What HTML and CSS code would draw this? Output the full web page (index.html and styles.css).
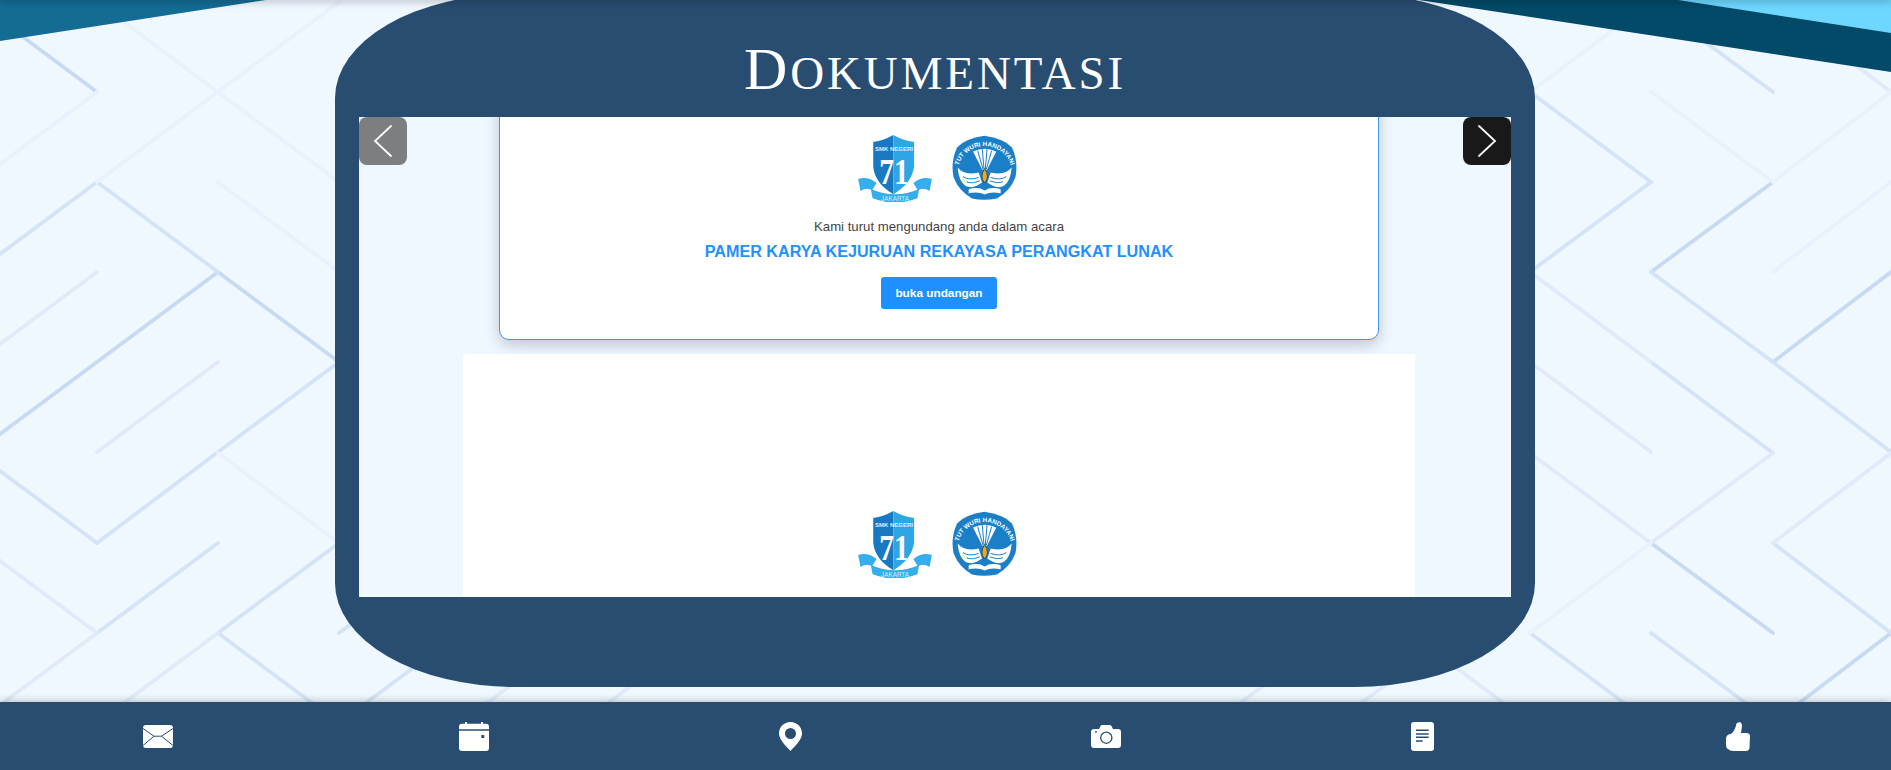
FILE: index.html
```html
<!DOCTYPE html>
<html lang="id">
<head>
<meta charset="utf-8">
<title>Dokumentasi</title>
<link rel="stylesheet" href="styles.css">
</head>
<body class="page">
<svg class="backdrop" viewBox="0 0 1891 770" aria-hidden="true">
  <g class="ln ln-strong"><path d="M-24 2L97 92M218 272L339 362M218 272L97 362L-24 452M1773 182L1651 272M1773 362L1891 272M1891 633L1773 723M1651 543L1773 633"/></g>
  <g class="ln ln-med"><path d="M97 182L-24 272M97 182L218 272M339 362L218 452L97 543M-24 453L97 543M218 543L97 633M339 543L218 633M218 633L339 723M339 633L460 543M460 633L339 723M1530 92L1651 182L1530 272M1651 272L1773 362L1891 452M1651 2L1773 92M1651 362L1773 453M1773 543L1891 633M1530 633L1651 723M1651 633L1773 723"/></g>
  <g class="ln ln-light"><path d="M97 272L-24 362M218 362L97 452M97 633L-24 723M-24 543L97 633M218 633L97 723M581 633L460 723M702 633L581 723M1335 633L1213 723M1456 633L1334 723M1530 272L1651 362M1530 362L1651 452M1530 453L1651 543M1773 453L1651 543M1891 453L1773 543M1410 633L1530 723M1773 2L1891 92"/></g>
  <g class="ln ln-faint"><path d="M97 92L-24 182M339 2L97 182M97 2L339 182M218 182L339 272M218 453L339 543M1651 92L1773 182M1773 182L1891 92M1773 272L1891 182M1530 92L1651 2M1651 543L1530 633"/></g>
  <path class="wedge-teal" d="M0 0L266 0L0 41Z"/>
  <path class="wedge-dark" d="M1419 0L1891 72L1891 0Z"/>
  <path class="wedge-sky" d="M1678 0L1891 33L1891 0Z"/>
</svg>
<div class="topbar"></div>
<main class="panel">
  <h1 class="panel-title"><span class="panel-cap">D</span>okumentasi</h1>
  <section class="slider">
    <div class="slide-first">
      <article class="invite">
        <div class="logos">
          <svg class="logo-smk" viewBox="55 45 220 200" role="img" aria-label="SMK Negeri 71 Jakarta">
            <path class="smk-ribbon" d="M55 176Q85 168 110 188L97 210Q80 200 62 212ZM275 176Q245 168 220 188L233 210Q250 200 268 212Z"/>
            <path class="smk-dark" d="M160 45Q130 62 100 66L100 140Q105 190 160 222Z"/>
            <path class="smk-light" d="M160 45Q190 62 222 66L222 140Q215 190 160 222Z"/>
            <path class="smk-ribbon" d="M93 206Q165 238 237 206L232 234Q165 260 98 234Z"/>
            <text class="smk-name" x="162" y="92">SMK NEGERI</text>
            <text class="smk-num" x="162" y="190" textLength="88" lengthAdjust="spacingAndGlyphs">71</text>
            <text class="smk-city" x="165" y="243">JAKARTA</text>
          </svg>
          <svg class="logo-tut" viewBox="335 48 195 200" role="img" aria-label="Tut Wuri Handayani">
            <path class="tut-base" d="M432 50Q490 58 515 85Q535 130 525 175Q510 215 470 238Q430 246 395 238Q355 215 340 175Q330 130 350 85Q375 58 432 50Z"/>
            <path id="tut-arc-1" class="tut-none" d="M352 150A82 82 0 0 1 514 150"/>
            <text class="tut-motto"><textPath href="#tut-arc-1" startOffset="50%">TUT WURI HANDAYANI</textPath></text>
            <path class="tut-white" d="M398 97Q433 80 468 97L440 152H426Z"/>
            <path class="tut-slit" d="M412 94L428 150M426 90L431 150M440 90L435 150M454 94L438 150"/>
            <path class="tut-white" d="M352 145Q372 170 415 160L425 190Q395 212 375 200Q355 185 352 145ZM514 145Q494 170 451 160L441 190Q471 212 491 200Q511 185 514 145Z"/>
            <path class="tut-slit" d="M368 172Q385 185 415 175M378 188Q395 195 418 185M498 172Q481 185 451 175M488 188Q471 195 448 185"/>
            <path class="tut-flame" d="M433 148Q450 172 433 192Q416 172 433 148Z"/>
            <path class="tut-white" d="M385 210Q415 202 433 214Q451 202 481 210L481 222Q451 216 433 226Q415 216 385 222Z"/>
          </svg>
        </div>
        <p class="invite-lead">Kami turut mengundang anda dalam acara</p>
        <h2 class="invite-name">PAMER KARYA KEJURUAN REKAYASA PERANGKAT LUNAK</h2>
        <a class="invite-btn">buka undangan</a>
      </article>
    </div>
    <div class="slide-next">
      <div class="logos">
        <svg class="logo-smk" viewBox="55 45 220 200" role="img" aria-label="SMK Negeri 71 Jakarta">
          <path class="smk-ribbon" d="M55 176Q85 168 110 188L97 210Q80 200 62 212ZM275 176Q245 168 220 188L233 210Q250 200 268 212Z"/>
          <path class="smk-dark" d="M160 45Q130 62 100 66L100 140Q105 190 160 222Z"/>
          <path class="smk-light" d="M160 45Q190 62 222 66L222 140Q215 190 160 222Z"/>
          <path class="smk-ribbon" d="M93 206Q165 238 237 206L232 234Q165 260 98 234Z"/>
          <text class="smk-name" x="162" y="92">SMK NEGERI</text>
          <text class="smk-num" x="162" y="190" textLength="88" lengthAdjust="spacingAndGlyphs">71</text>
          <text class="smk-city" x="165" y="243">JAKARTA</text>
        </svg>
        <svg class="logo-tut" viewBox="335 48 195 200" role="img" aria-label="Tut Wuri Handayani">
          <path class="tut-base" d="M432 50Q490 58 515 85Q535 130 525 175Q510 215 470 238Q430 246 395 238Q355 215 340 175Q330 130 350 85Q375 58 432 50Z"/>
          <path id="tut-arc-2" class="tut-none" d="M352 150A82 82 0 0 1 514 150"/>
          <text class="tut-motto"><textPath href="#tut-arc-2" startOffset="50%">TUT WURI HANDAYANI</textPath></text>
          <path class="tut-white" d="M398 97Q433 80 468 97L440 152H426Z"/>
          <path class="tut-slit" d="M412 94L428 150M426 90L431 150M440 90L435 150M454 94L438 150"/>
          <path class="tut-white" d="M352 145Q372 170 415 160L425 190Q395 212 375 200Q355 185 352 145ZM514 145Q494 170 451 160L441 190Q471 212 491 200Q511 185 514 145Z"/>
          <path class="tut-slit" d="M368 172Q385 185 415 175M378 188Q395 195 418 185M498 172Q481 185 451 175M488 188Q471 195 448 185"/>
          <path class="tut-flame" d="M433 148Q450 172 433 192Q416 172 433 148Z"/>
          <path class="tut-white" d="M385 210Q415 202 433 214Q451 202 481 210L481 222Q451 216 433 226Q415 216 385 222Z"/>
        </svg>
      </div>
    </div>
    <button class="arrow arrow-prev" aria-label="Sebelumnya"><svg class="arrow-icon" viewBox="0 0 48 48"><path d="M32 9L16 24L32 39"/></svg></button>
    <button class="arrow arrow-next" aria-label="Berikutnya"><svg class="arrow-icon" viewBox="0 0 48 48"><path d="M16 9L32 24L16 39"/></svg></button>
  </section>
</main>
<nav class="dock">
  <a class="dock-item"><svg class="ic-mail" viewBox="0 0 30 23"><rect class="ic-fill" width="30" height="23" rx="3"/><path class="ic-cut" d="M0 3.5L11 11.2H18.5L30 3.5M0 20.5L11 11.2M30 20.5L18.5 11.2"/></svg></a>
  <a class="dock-item"><svg class="ic-cal" viewBox="0 0 30 29"><path class="ic-fill" d="M6 0H8V1.7H22V0H24V1.7H27Q30 1.7 30 4.7V7.3H0V4.7Q0 1.7 3 1.7H6ZM0 8.7H30V26Q30 29 27 29H3Q0 29 0 26Z"/><rect class="ic-hole" x="22.3" y="13" width="3" height="3" rx=".6"/></svg></a>
  <a class="dock-item"><svg class="ic-pin" viewBox="0 0 23 29"><path class="ic-fill ic-even" d="M11.5 0C18 0 23 5 23 11.5C23 18 15 25 11.5 29C8 25 0 18 0 11.5C0 5 5 0 11.5 0ZM11.5 6A5.5 5.5 0 1 0 11.5 17A5.5 5.5 0 1 0 11.5 6Z"/></svg></a>
  <a class="dock-item"><svg class="ic-cam" viewBox="0 0 30 23"><path class="ic-fill" d="M8 4L9.5 1Q10 0 11.5 0H18.5Q20 0 20.5 1L22 4H27Q30 4 30 7V20Q30 23 27 23H3Q0 23 0 20V7Q0 4 3 4Z"/><circle class="ic-ring" cx="15.3" cy="12.7" r="5.6"/><circle class="ic-hole" cx="5" cy="7" r=".9"/></svg></a>
  <a class="dock-item"><svg class="ic-doc" viewBox="0 0 23 29"><rect class="ic-fill" width="23" height="29" rx="3"/><path class="ic-cut ic-thick" d="M5 8.3H17.7M5 12H17.7M5 15.3H17.7M5 19H11.7"/></svg></a>
  <a class="dock-item"><svg class="ic-thumb" viewBox="0 0 24 29"><path class="ic-fill" d="M10.5 1.5Q12 0 14 0Q16 1 16 4L15 11H21Q24 11.5 24 14L23.5 26Q23 29 20 29H7Q4 29 2 27Q0 26 0 23V16Q1 12 5 12Q9 9 10.5 1.5Z"/></svg></a>
</nav>
</body>
</html>
```
FILE: styles.css
```css
* { box-sizing: border-box; }
html, body { margin: 0; padding: 0; }
.page {
  position: relative;
  display: flex;
  flex-direction: column;
  height: 770px;
  overflow: hidden;
  background: #eff7ff;
  font-family: "Liberation Sans", Arial, sans-serif;
}
.backdrop {
  position: absolute;
  left: 0;
  top: 0;
  width: 1891px;
  height: 770px;
}
.ln { fill: none; stroke-width: 3.8; stroke-linecap: round; stroke-linejoin: miter; }
.ln-strong { stroke: #c8daf3; }
.ln-med { stroke: #d4e3f7; }
.ln-light { stroke: #dfebfa; }
.ln-faint { stroke: #e8f1fd; }
.wedge-teal { fill: #146c94; }
.wedge-dark { fill: #024a68; }
.wedge-sky { fill: #6dd7ff; }
.topbar {
  position: absolute;
  left: 0;
  top: 0;
  width: 100%;
  height: 0;
  z-index: 3;
  box-shadow: 0 0 7px 1px rgba(0, 0, 0, .55);
}
.panel {
  position: relative;
  width: 1200px;
  height: 693px;
  margin: -6px 0 0 335px;
  padding: 0 24px;
  flex: none;
  background: #284d70;
  border-radius: 15%;
}
.panel-title {
  height: 123px;
  margin: 0;
  padding-top: 37px;
  color: #fff;
  font: 400 47px/76px "Liberation Serif", "Times New Roman", serif;
  letter-spacing: 2.9px;
  text-align: center;
  text-transform: uppercase;
}
.panel-cap { font-size: 60px; }
.slider {
  position: relative;
  width: 1152px;
  height: 480px;
  overflow: hidden;
  background: #eff7ff;
}
.slide-first {
  display: flex;
  align-items: flex-start;
  height: 237px;
  padding-left: 140px;
}
.invite {
  display: flex;
  flex-direction: column;
  align-items: center;
  flex: none;
  width: 880px;
  height: 262.5px;
  margin-top: -40px;
  padding-top: 57px;
  background: #fff;
  border: 1px solid #3f97f0;
  border-radius: 10px;
  box-shadow: 0 5px 15px rgba(0, 0, 0, .2);
}
.logos {
  display: flex;
  gap: 20px;
  justify-content: center;
  padding-right: 3px;
}
.logo-smk { display: block; width: 74px; height: 67px; }
.logo-tut { display: block; width: 65px; height: 67px; }
.smk-dark { fill: #1878c2; }
.smk-light { fill: #2ea6e6; }
.smk-ribbon { fill: #34aeec; }
.smk-name { fill: #d8effb; font: 700 18px "Liberation Sans", sans-serif; text-anchor: middle; }
.smk-num { fill: #fff; font: 700 104px "Liberation Serif", serif; text-anchor: middle; }
.smk-city { fill: #d8f1fc; font: 400 19px "Liberation Sans", sans-serif; text-anchor: middle; }
.tut-base { fill: #1b7fc8; }
.tut-none { fill: none; }
.tut-motto { fill: #fff; font: 700 19px "Liberation Sans", sans-serif; text-anchor: middle; }
.tut-white { fill: #fff; }
.tut-slit { fill: none; stroke: #1b7fc8; stroke-width: 3; }
.tut-flame { fill: #f2a51f; stroke: #1a4f78; stroke-width: 3; }
.invite-lead {
  margin: 16px 0 0;
  color: #444;
  font-size: 13.2px;
  line-height: 18px;
}
.invite-name {
  margin: 5px 0 0;
  color: #1e90ff;
  font-size: 16.15px;
  font-weight: 700;
  line-height: 20px;
}
.invite-btn {
  display: flex;
  align-items: center;
  justify-content: center;
  width: 116px;
  height: 32px;
  margin-top: 16px;
  background: #1e90ff;
  border-radius: 3px;
  color: #fff;
  font-size: 11.8px;
  font-weight: 700;
}
.slide-next {
  position: relative;
  width: 952px;
  height: 243px;
  margin-left: 104px;
  padding-top: 157px;
  background: #fff;
}
.arrow {
  position: absolute;
  top: 0;
  width: 48px;
  height: 48px;
  padding: 0;
  border: 0;
  border-radius: 8px;
}
.arrow-prev { left: 0; background: #7c7e80; }
.arrow-next { right: 0; background: #191919; }
.arrow-icon { display: block; width: 48px; height: 48px; }
.arrow-icon path { fill: none; stroke: #fff; stroke-width: 1.8; stroke-linecap: round; stroke-linejoin: miter; }
.dock {
  position: relative;
  display: grid;
  grid-template-columns: repeat(6, 316px);
  flex: none;
  height: 68px;
  margin-top: auto;
  background: #284d70;
  box-shadow: 0 0 8px rgba(0, 0, 0, .3);
}
.dock-item { display: flex; align-items: center; justify-content: center; }
.ic-fill { fill: #fff; }
.ic-even { fill-rule: evenodd; }
.ic-hole { fill: #284d70; }
.ic-cut { fill: none; stroke: #284d70; stroke-width: 1; }
.ic-thick { stroke-width: 1.5; }
.ic-ring { fill: none; stroke: #284d70; stroke-width: 1.3; }
.ic-mail { display: block; width: 30px; height: 23px; }
.ic-cal { display: block; width: 30px; height: 29px; }
.ic-pin { display: block; width: 23px; height: 29px; }
.ic-cam { display: block; width: 30px; height: 23px; }
.ic-doc { display: block; width: 23px; height: 29px; }
.ic-thumb { display: block; width: 24px; height: 29px; }
```
